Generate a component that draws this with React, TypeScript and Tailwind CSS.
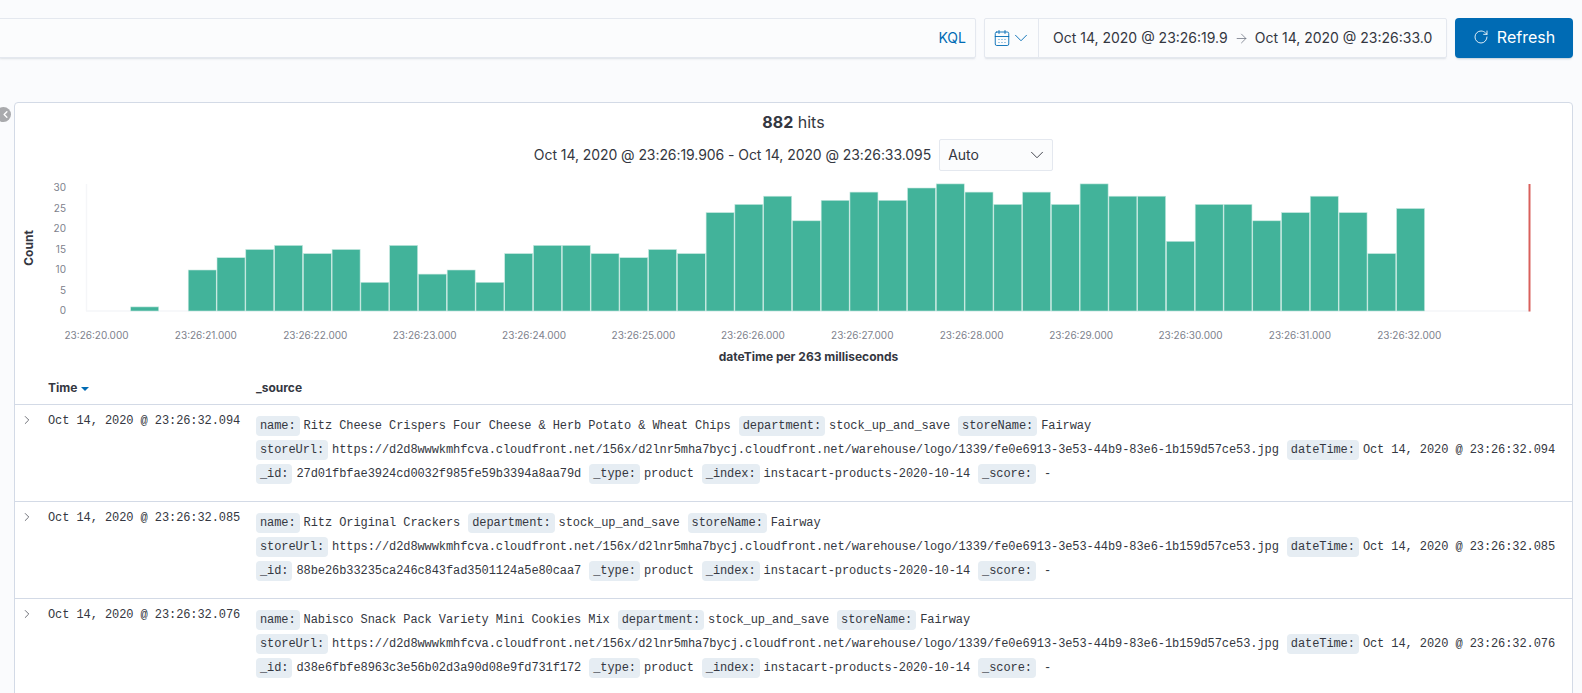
import { ArrowRight, CalendarDays, ChevronDown, ChevronLeft, ChevronRight, RotateCw } from 'lucide-react';

const counts = [1, 0, 10, 13, 15, 16, 14, 15, 7, 16, 9, 10, 7, 14, 16, 16, 14, 13, 15, 14, 24, 26, 28, 22, 27, 29, 27, 30, 31, 29, 26, 29, 26, 31, 28, 28, 17, 26, 26, 22, 24, 28, 24, 14, 25];

const yTicks = [0, 5, 10, 15, 20, 25, 30];
const xTicks = ['20', '21', '22', '23', '24', '25', '26', '27', '28', '29', '30', '31', '32'];

const storeUrl = 'https://d2d8wwwkmhfcva.cloudfront.net/156x/d2lnr5mha7bycj.cloudfront.net/warehouse/logo/1339/fe0e6913-3e53-44b9-83e6-1b159d57ce53.jpg';

const rows = [
  { time: 'Oct 14, 2020 @ 23:26:32.094', name: 'Ritz Cheese Crispers Four Cheese & Herb Potato & Wheat Chips', id: '27d01fbfae3924cd0032f985fe59b3394a8aa79d' },
  { time: 'Oct 14, 2020 @ 23:26:32.085', name: 'Ritz Original Crackers', id: '88be26b33235ca246c843fad3501124a5e80caa7' },
  { time: 'Oct 14, 2020 @ 23:26:32.076', name: 'Nabisco Snack Pack Variety Mini Cookies Mix', id: 'd38e6fbfe8963c3e56b02d3a90d08e9fd731f172' },
];

const BASE_Y = 208;
const UNIT = 4.1;

const Histogram = () => (
  <svg width="1558" height="248" className="block font-['Inter',sans-serif]">
    <line x1="71.5" y1="81" x2="71.5" y2={BASE_Y} stroke="#f5f6f8" strokeWidth="1.5" />
    <line x1="71" y1={BASE_Y} x2="1515" y2={BASE_Y} stroke="#f5f6f8" strokeWidth="1.5" />
    {yTicks.map((t) => (
      <text key={t} x="51" y={BASE_Y + 3 - t * UNIT} textAnchor="end" fontSize="10" fill="#7d818c">{t}</text>
    ))}
    <text transform={`translate(18 ${BASE_Y - 63}) rotate(-90)`} textAnchor="middle" fontSize="12" fontWeight="700" fill="#343741">Count</text>
    {counts.map((c, i) => (c > 0 ?
      <rect key={i} x={115.7 + i * 28.77} y={BASE_Y - c * UNIT} width="28" height={c * UNIT} fill="#42b39a" stroke="#c5e8df" strokeWidth="0.6" /> :
      null
    ))}
    <line x1="1514.5" y1="81" x2="1514.5" y2="208.5" stroke="#d9605c" strokeWidth="2" />
    {xTicks.map((s, i) => (
      <text key={s} x={81.5 + i * 109.4} y="236" textAnchor="middle" fontSize="10" fill="#7d818c">{`23:26:${s}.000`}</text>
    ))}
  </svg>
);

const Field = ({ label, children }: { label: string; children: React.ReactNode }) => (
  <span className="flex h-6 items-center whitespace-nowrap">
    <span className="mr-1 rounded-[4px] bg-[#e6edf3] px-1 leading-5 text-[#343741]">{label}:</span>
    <span className="text-[#343741]">{children}</span>
  </span>
);

const App = () => {
  return (
    <div className="h-[693px] w-full overflow-hidden bg-[#fafbfd] font-['Inter',sans-serif] text-[#343741]">
      {/* query bar */}
      <div className="flex gap-2 pr-[9px] pt-[18px]">
        <div className="-ml-px flex h-10 flex-1 items-center justify-end rounded-r-[2px] border border-[#e4e8ef] bg-[#fbfcfd] pr-[9px] text-sm text-[#006bb4] shadow-[0_2px_2px_-1px_rgba(152,162,179,0.3)]">
          KQL
        </div>
        <div className="flex h-10 w-[463px] items-center rounded-[2px] border border-[#e4e8ef] bg-[#fbfcfd] text-sm shadow-[0_2px_2px_-1px_rgba(152,162,179,0.3)]">
          <div className="flex h-full w-[54px] items-center border-r border-[#e4e8ef] pl-[8px] text-[#006bb4]">
            <CalendarDays size={18} strokeWidth={1.2} />
            <ChevronDown size={22} strokeWidth={1} className="-ml-px" />
          </div>
          <span className="ml-[14px]">Oct 14, 2020 @ 23:26:19.9</span>
          <ArrowRight size={15} strokeWidth={1.2} className="mx-[6px] mt-px text-[#69707d]" />
          <span>Oct 14, 2020 @ 23:26:33.0</span>
        </div>
        <button className="flex h-10 w-[118px] items-center justify-center gap-2 rounded-[4px] bg-[#006bb4] pb-[2px] text-base text-white shadow-[0_2px_2px_-1px_rgba(54,97,126,0.3)]">
          <RotateCw size={16} strokeWidth={1.3} />
          Refresh
        </button>
      </div>

      {/* results panel */}
      <div className="relative ml-[14px] mr-[9px] mt-[44px] h-[700px] rounded-[4px] border border-[#d3dae6] bg-white">
        <div className="absolute left-[-19px] top-[4px] flex h-[15px] w-[15px] items-center justify-center rounded-full bg-[#a9aaad] pl-[3px] text-white">
          <ChevronLeft size={11} strokeWidth={3} />
        </div>

        <div className="pt-[9px] text-center text-base leading-5">
          <span className="font-bold">882</span> hits
        </div>
        <div className="mt-[7px] flex h-8 items-center justify-center text-sm">
          <span className="tracking-[-0.07px]">Oct 14, 2020 @ 23:26:19.906 - Oct 14, 2020 @ 23:26:33.095</span>
          <div className="ml-2 flex h-8 w-[114px] items-center justify-between rounded-[2px] border border-[#e4e8ef] bg-[#fbfcfd] pl-2 pr-1">
            Auto
            <ChevronDown size={22} strokeWidth={1} />
          </div>
        </div>

        <div className="-mt-[68px]">
          <Histogram />
          <div className="-mt-[2px] pl-[30px] text-center text-xs font-bold leading-4">dateTime per 263 milliseconds</div>
        </div>

        {/* table */}
        <div className="mt-1 flex h-9 items-center border-b border-[#d3dae6] pt-[2px] text-xs font-bold">
          <div className="flex w-[241px] items-center gap-1 pl-[33px]">
            Time
            <svg width="8" height="6" viewBox="0 0 8 6" className="mt-[2px]">
              <path d="M0 1h8L4 5z" fill="#006bb4" />
            </svg>
          </div>
          <div>_source</div>
        </div>
        {rows.map((row) => (
          <div key={row.time} className="flex h-[97px] border-b border-[#d3dae6] pt-[9px] font-['Liberation_Mono',monospace] text-xs tracking-[-0.083px]">
            <div className="-mt-px w-[33px] pl-[5px]">
              <ChevronRight size={14} strokeWidth={1.2} />
            </div>
            <div className="-mt-[3px] w-[208px] leading-5 text-[#343741]">{row.time}</div>
            <div className="flex flex-1 flex-wrap content-start gap-x-2 pr-2">
              <Field label="name">{row.name}</Field>
              <Field label="department">stock_up_and_save</Field>
              <Field label="storeName">Fairway</Field>
              <Field label="storeUrl">{storeUrl}</Field>
              <Field label="dateTime">{row.time}</Field>
              <Field label="_id">{row.id}</Field>
              <Field label="_type">product</Field>
              <Field label="_index">instacart-products-2020-10-14</Field>
              <Field label="_score"><span className="ml-1">-</span></Field>
            </div>
          </div>
        ))}
      </div>
    </div>
  );
};

export default App;
